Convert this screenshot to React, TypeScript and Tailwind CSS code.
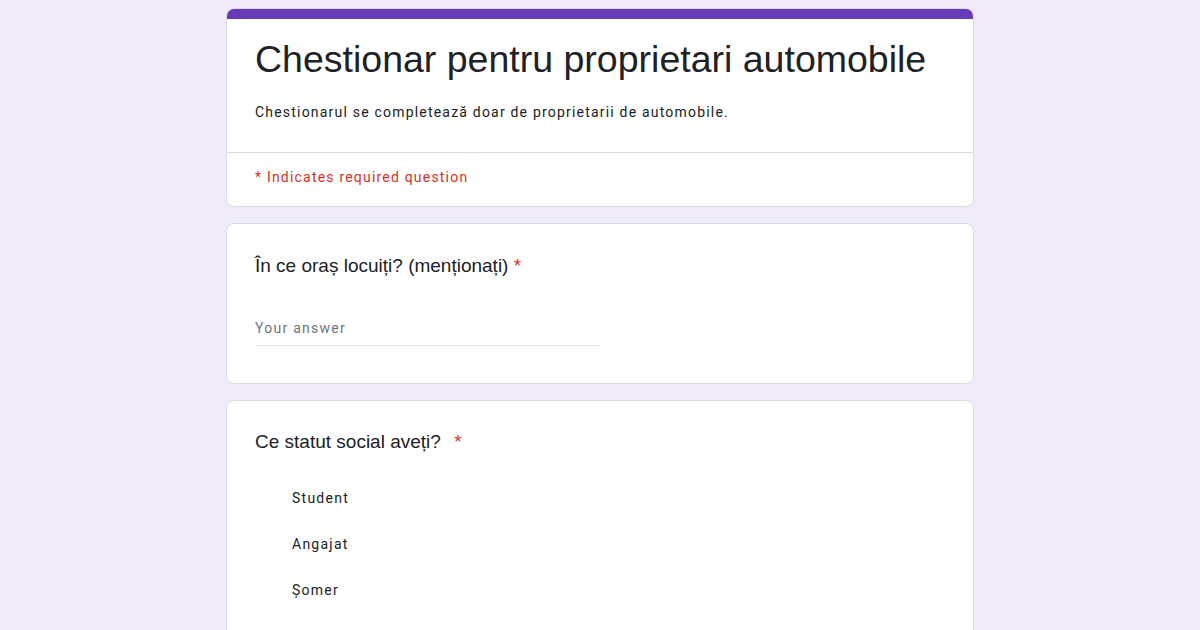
const OPTIONS = ["Student", "Angajat", "Șomer"];

function Card({ children, className = "" }: { children: React.ReactNode; className?: string }) {
  return (
    <div className={["rounded-lg border border-[#dadce0] bg-white", className].join(" ")}>
      {children}
    </div>
  );
}

export default function App() {
  return (
    <div className="min-h-[630px] w-full overflow-hidden bg-[#efebf8] font-['Roboto',sans-serif] text-[#202124]">
      <div className="mx-auto flex w-[748px] flex-col gap-4 pt-2">
        <Card className="overflow-hidden">
          <div className="h-[10px] bg-[#673ab7]" />
          <div className="px-7 pt-[18px] pb-[30px]">
            <h1 className="font-['Liberation_Sans',Arial,sans-serif] text-[37.5px] leading-[45px]">
              Chestionar pentru proprietari automobile
            </h1>
            <p className="mt-5 text-sm leading-5 tracking-[1.2px]">
              Chestionarul se completează doar de proprietarii de automobile.
            </p>
          </div>
          <div className="border-t border-[#dadce0] px-7 pt-[14px] pb-[19px] text-sm leading-5 tracking-[1.2px] text-[#d93025]">
            * Indicates required question
          </div>
        </Card>

        <Card className="px-7 pt-[30px] pb-[37px]">
          <div className="font-['Liberation_Sans',Arial,sans-serif] text-[19px] leading-6">
            În ce oraș locuiți? (menționați) <span className="text-[#d93025]">*</span>
          </div>
          <div className="mt-10 w-[345px] border-b border-[#e6e6e6] pb-[7px] text-sm leading-5 tracking-[1.25px] text-[#70757a]">
            Your answer
          </div>
        </Card>

        <Card className="h-[260px] px-7 pt-[29px]">
          <div className="font-['Liberation_Sans',Arial,sans-serif] text-[19px] leading-6">
            Ce statut social aveți? <span className="ml-2 text-[#d93025]">*</span>
          </div>
          <div className="mt-[34px] flex flex-col gap-[26px] pl-[37px]">
            {OPTIONS.map((o) => (
              <div key={o} className="text-sm leading-5 tracking-[1.25px]">
                {o}
              </div>
            ))}
          </div>
        </Card>
      </div>
    </div>
  );
}
